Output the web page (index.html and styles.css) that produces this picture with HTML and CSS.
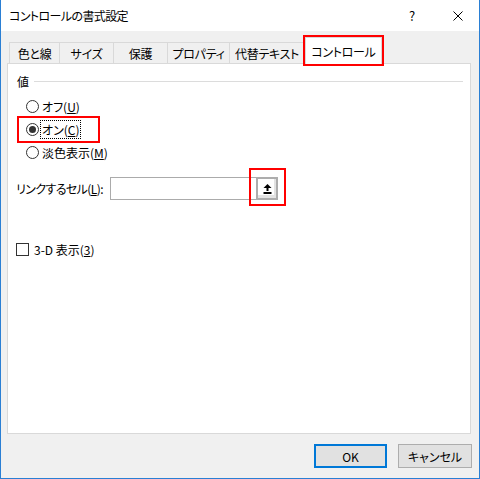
FILE: index.html
```html
<!DOCTYPE html>
<html lang="ja">
<head>
  <meta charset="UTF-8">
  <title>コントロールの書式設定</title>
  <link rel="stylesheet" href="styles.css">
</head>
<body>

  <div class="dialog">
    <div class="titlebar">
      <span class="title">コントロールの書式設定</span>
      <span class="help">?</span>
      <span class="close">
        <svg width="10" height="10" viewBox="0 0 10 10">
          <path d="M0.5 0.5 L9.5 9.5 M9.5 0.5 L0.5 9.5" stroke="#000" stroke-width="1" fill="none"/>
        </svg>
      </span>
    </div>

    <div class="client">
      <div class="tabs">
        <span class="tab tab-line">色と線</span>
        <span class="tab tab-size">サイズ</span>
        <span class="tab tab-lock">保護</span>
        <span class="tab tab-prop">プロパティ</span>
        <span class="tab tab-alt">代替テキスト</span>
        <span class="tab tab-ctrl active">コントロール</span>
      </div>

      <div class="panel">
        <div class="group-head">
          <span>値</span>
          <span class="rule"></span>
        </div>

        <div class="radios">
          <div class="radio">
            <span class="dot"></span>
            <span class="caption">オフ(<u>U</u>)</span>
          </div>
          <div class="radio marked">
            <span class="dot checked"></span>
            <span class="caption focus">オン(<u>C</u>)</span>
          </div>
          <div class="radio">
            <span class="dot"></span>
            <span class="caption">淡色表示(<u>M</u>)</span>
          </div>
        </div>

        <div class="link-row">
          <span class="link-label">リンクするセル(<u>L</u>):</span>
          <span class="cell-input"></span>
          <span class="pick-btn">
            <svg width="9" height="10" viewBox="0 0 9 10">
              <path d="M4.5 0 L8.5 4 L5.5 4 L5.5 7 L3.5 7 L3.5 4 L0.5 4 Z" fill="#000"/>
              <rect x="0.5" y="8" width="8" height="2" fill="#000"/>
            </svg>
          </span>
        </div>

        <div class="check-row">
          <span class="box"></span>
          <span>3-D 表示(<u>3</u>)</span>
        </div>
      </div>

      <div class="actions">
        <button class="btn default">OK</button>
        <button class="btn">キャンセル</button>
      </div>
    </div>
  </div>

</body>
</html>
```

FILE: styles.css
```css
* {
  box-sizing: border-box;
}

body {
  margin: 0;
  font-family: "Noto Sans CJK JP", "Noto Sans", sans-serif;
  font-feature-settings: "palt";
  font-size: 12px;
  color: #000;
  background: #fff;
}

.dialog {
  width: 480px;
  height: 479px;
  display: flex;
  flex-direction: column;
  border: 1px solid #2a7fd4;
  border-top: none;
}

/* title bar */
.titlebar {
  height: 31px;
  display: flex;
  align-items: center;
  background: #fff;
  padding-left: 8px;
}

.title {
  flex: 1;
  font-size: 12px;
  letter-spacing: -0.6px;
}

.help {
  width: 14px;
  text-align: center;
  font-size: 13px;
  margin-right: 34px;
}

.close {
  width: 10px;
  height: 10px;
  display: flex;
  margin-right: 16px;
}

/* client area */
.client {
  flex: 1;
  display: flex;
  flex-direction: column;
  background: #f0f0f0;
}

.tabs {
  height: 32px;
  display: flex;
  align-items: flex-end;
  padding-left: 8px;
  letter-spacing: -0.3px;
}

.tab {
  height: 21px;
  display: flex;
  align-items: center;
  justify-content: center;
  border: 1px solid #d9d9d9;
  border-bottom: none;
  border-left: none;
  background: #f0f0f0;
  padding-top: 1px;
}

.tab-line { width: 51px; border-left: 1px solid #d9d9d9; }
.tab-size { width: 54px; }
.tab-lock { width: 54px; }
.tab-prop { width: 62px; }
.tab-alt  { width: 75px; }

.tab.active {
  position: relative;
  z-index: 1;
  width: 77px;
  height: 27px;
  margin-bottom: -1px;
  padding-top: 0;
  background: #fff;
  border-left: 1px solid #d9d9d9;
  outline: 2px solid #f00;
}

.panel {
  width: 464px;
  height: 371px;
  margin-left: 6px;
  background: #fff;
  border: 1px solid #d9d9d9;
  padding: 8px 7px 0 8px;
}

.group-head {
  height: 18px;
  display: flex;
  align-items: center;
  gap: 5px;
  padding-left: 1px;
}

.rule {
  flex: 1;
  height: 1px;
  background: #dcdcdc;
}

.radios {
  margin-top: 5px;
  margin-left: 3px;
  display: flex;
  flex-direction: column;
}

.radio {
  width: fit-content;
  height: 23px;
  display: flex;
  align-items: center;
  padding-left: 7px;
}

.radio.marked {
  width: 79px;
  outline: 2px solid #f00;
}

.dot {
  width: 13px;
  height: 13px;
  border: 1px solid #333;
  border-radius: 50%;
  background: #fff;
  display: flex;
  align-items: center;
  justify-content: center;
}

.dot.checked::after {
  content: "";
  width: 7px;
  height: 7px;
  border-radius: 50%;
  background: #333;
}

.caption {
  margin-left: 1px;
  padding: 0 1px;
  height: 19px;
  display: flex;
  align-items: center;
  border: 1px dotted transparent;
}

.caption.focus {
  border-color: #000;
}

.link-row {
  margin-top: 13px;
  height: 23px;
  display: flex;
  align-items: center;
}

.link-label {
  width: 94px;
  flex: none;
  letter-spacing: -0.6px;
}

.cell-input {
  width: 146px;
  height: 23px;
  border: 1px solid #ababab;
  border-right: none;
}

.pick-btn {
  position: relative;
  width: 22px;
  height: 23px;
  display: flex;
  align-items: center;
  justify-content: center;
  border: 2px solid #adadad;
  background: #fff;
  box-shadow: inset -2px -3px 0 #e3e3e3;
}

.pick-btn::after {
  content: "";
  position: absolute;
  left: -9px;
  top: -11px;
  right: -10px;
  bottom: -8px;
  border: 2px solid #f00;
}

.check-row {
  margin-top: 40px;
  height: 18px;
  display: flex;
  align-items: center;
  gap: 5px;
}

.box {
  width: 13px;
  height: 13px;
  border: 1px solid #333;
  background: #fff;
}

/* bottom buttons */
.actions {
  display: flex;
  justify-content: flex-end;
  gap: 11px;
  padding: 10px 7px 0 0;
}

.btn {
  width: 74px;
  height: 24px;
  font-family: inherit;
  font-size: 12px;
  font-feature-settings: "palt";
  color: #000;
  background: #e1e1e1;
  border: 1px solid #adadad;
  padding: 0;
}

.btn.default {
  width: 73px;
  border: 2px solid #0078d7;
}
```
